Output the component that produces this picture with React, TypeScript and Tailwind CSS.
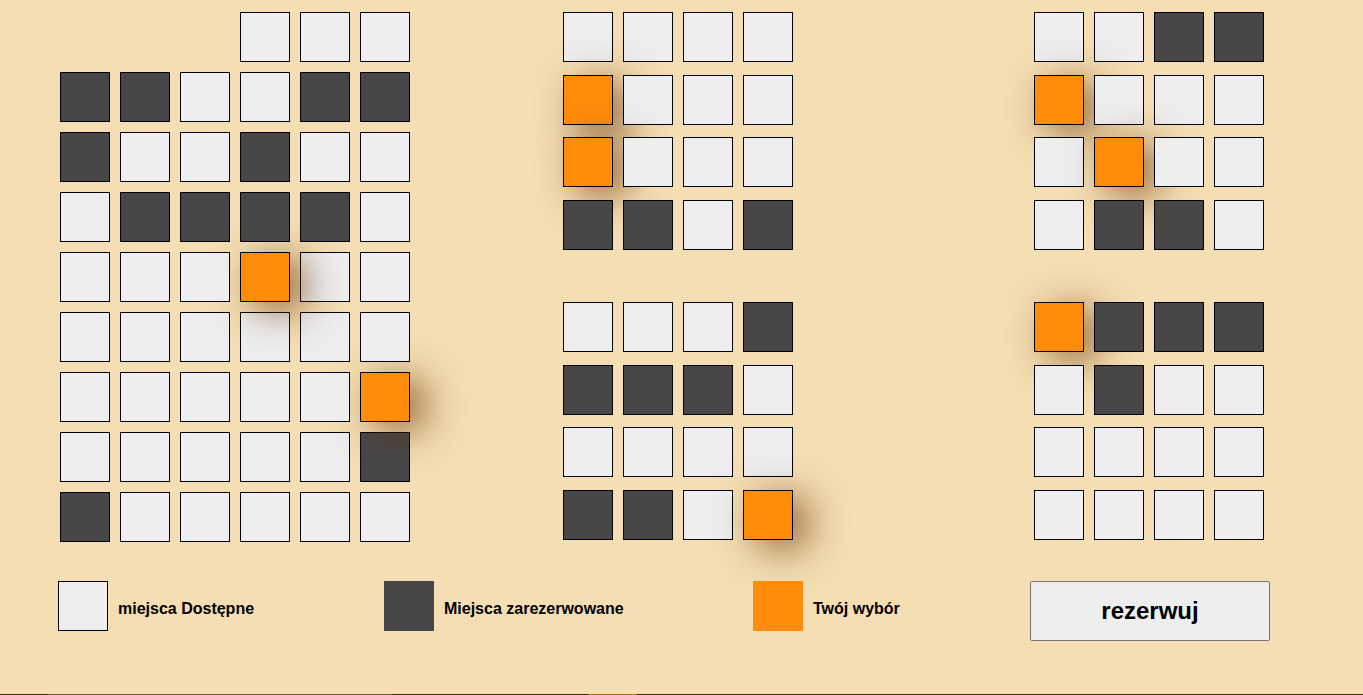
import { useState } from "react";

type Status = "free" | "taken" | "chosen";

const toStatus = (code: string): Status =>
  code === "x" ? "taken" : code === "o" ? "chosen" : "free";

const sideRows = ["...", "xx..xx", "x..x..", ".xxxx.", "...o..", "......", ".....o", ".....x", "x....."];

const tableColumns = [
  [
    ["....", "o...", "o...", "xx.x"],
    ["...x", "xxx.", "....", "xx.o"],
  ],
  [
    ["..xx", "o...", ".o..", ".xx."],
    ["oxxx", ".x..", "....", "...."],
  ],
];

const seatStyles: Record<Status, string> = {
  free: "bg-[#eeeeee]",
  taken: "bg-[#474747]",
  chosen: "bg-[#ff8c0a] shadow-[14px_8px_38px_0px_rgba(102,51,0,0.7)]",
};

function Seat({ initial, label }: { initial: Status; label: string }) {
  const [status, setStatus] = useState<Status>(initial);
  return (
    <button
      type="button"
      aria-label={label}
      aria-pressed={status === "chosen"}
      disabled={status === "taken"}
      onClick={() => setStatus(status === "free" ? "chosen" : "free")}
      className={`block size-[50px] border border-black ${seatStyles[status]}`}
    />
  );
}

// Earlier seats are stacked above later ones, so a chosen seat casts its shadow on those that follow.
function SideBlock() {
  const seats = sideRows.join("").split("");
  return (
    <div className="isolate grid w-fit grid-cols-[repeat(6,50px)] gap-[10px]">
      {seats.map((code, i) => (
        <div
          key={i}
          className={i === 0 ? "relative col-start-4" : "relative"}
          style={{ zIndex: seats.length - i }}
        >
          <Seat initial={toStatus(code)} label={`Miejsce ${i + 1}`} />
        </div>
      ))}
    </div>
  );
}

function TableBlock({ rows }: { rows: string[] }) {
  return (
    <div className="grid h-[250px] w-fit grid-cols-[repeat(4,50px)] grid-rows-4 items-start gap-x-[10px]">
      {rows
        .join("")
        .split("")
        .map((code, i) => (
          <Seat key={i} initial={toStatus(code)} label={`Miejsce ${i + 1}`} />
        ))}
    </div>
  );
}

function LegendItem({ swatch, text }: { swatch: string; text: string }) {
  return (
    <li className="flex items-center gap-[10px]">
      <span className={`size-[50px] shrink-0 ${swatch}`} />
      <span className="pt-[6px]">{text}</span>
    </li>
  );
}

export default function App() {
  return (
    <div className="flex min-h-screen flex-col bg-[#f5deb3] font-['Liberation_Sans',Arial,sans-serif] text-black">
      <main className="grow">
        <section className="grid grid-cols-[503fr_471fr_329fr] items-start pt-3 pl-[60px]">
          <SideBlock />
          {tableColumns.map((tables, c) => (
            <div key={c} className="flex flex-col gap-10">
              {tables.map((rows, t) => (
                <TableBlock key={t} rows={rows} />
              ))}
            </div>
          ))}
        </section>
        <section className="mt-[29px] grid grid-cols-[972fr_333fr] items-start pl-[58px]">
          <ul className="grid grid-cols-[326fr_369fr_277fr] text-base font-bold">
            <LegendItem swatch="border border-black bg-[#eeeeee]" text="miejsca Dostępne" />
            <LegendItem swatch="bg-[#474747]" text="Miejsca zarezerwowane" />
            <LegendItem swatch="bg-[#ff8c0a]" text="Twój wybór" />
          </ul>
          <button
            type="button"
            className="h-[60px] w-60 rounded-[2px] border border-[#767676] bg-[#eeeeee] text-2xl font-bold"
          >
            rezerwuj
          </button>
        </section>
      </main>
      <footer className="grid h-px grid-cols-[48fr_344fr_197fr_48fr_726fr]">
        <span className="bg-[#3d3000]" />
        <span className="bg-[#6b5a2e]" />
        <span className="bg-[#3d3000]" />
        <span className="bg-[#a87800]" />
        <span className="bg-[#3d3000]" />
      </footer>
    </div>
  );
}
